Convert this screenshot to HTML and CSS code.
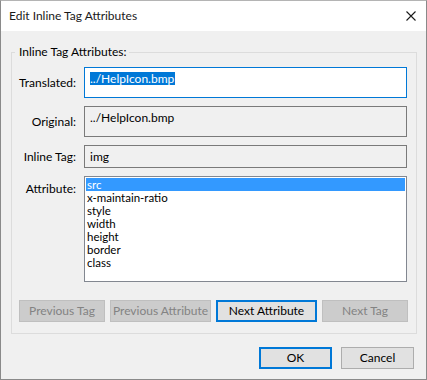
FILE: index.html
```html
<!DOCTYPE html>
<html>
<head>
<meta charset="utf-8">
<link rel="stylesheet" href="styles.css">
</head>
<body>
<div class="window">
  <div class="titlebar">
    <span class="title">Edit Inline Tag Attributes</span>
    <svg class="close" width="12" height="12" viewBox="0 0 12 12"><path d="M1.5 1.5 L10.5 10.5 M10.5 1.5 L1.5 10.5" stroke="#1a1a1a" stroke-width="1.1" fill="none"/></svg>
  </div>
  <div class="body">
    <fieldset class="group">
      <legend>Inline Tag Attributes:</legend>
      <div class="grid">
        <label class="lbl">Translated:</label>
        <div class="field edit"><span class="sel">../HelpIcon.bmp</span></div>
        <label class="lbl">Original:</label>
        <div class="field ro tall">../HelpIcon.bmp</div>
        <label class="lbl">Inline Tag:</label>
        <div class="field ro short">img</div>
        <label class="lbl top">Attribute:</label>
        <div class="list">
          <div class="item selected">src</div>
          <div class="item">x-maintain-ratio</div>
          <div class="item">style</div>
          <div class="item">width</div>
          <div class="item">height</div>
          <div class="item">border</div>
          <div class="item">class</div>
        </div>
      </div>
      <div class="navrow">
        <button class="btn disabled w86">Previous Tag</button>
        <button class="btn disabled w101">Previous Attribute</button>
        <button class="btn default w101">Next Attribute</button>
        <button class="btn disabled w86">Next Tag</button>
      </div>
    </fieldset>
    <div class="footer">
      <button class="btn default w73">OK</button>
      <button class="btn w73">Cancel</button>
    </div>
  </div>
</div>
</body>
</html>
```
FILE: styles.css
```css
html, body {
  margin: 0;
  padding: 0;
  background: #f0f0f0;
}
body {
  font-family: Lato, "Noto Sans", sans-serif;
  font-size: 12px;
  color: #000;
}
.window {
  width: 427px;
  height: 380px;
  box-sizing: border-box;
  border: 1px solid #8a8a8a;
  border-top-color: #b4b4b4;
  display: flex;
  flex-direction: column;
  background: #f0f0f0;
}
.titlebar {
  height: 30px;
  background: #fff;
  display: flex;
  align-items: center;
  justify-content: space-between;
  padding: 0 9px 0 8px;
  flex: none;
}
.title {
  font-size: 12px;
  color: #1a1a1a;
  line-height: 16px;
}
.close {
  display: block;
}
.body {
  flex: 1;
  padding: 13px 9px 0 10px;
  display: flex;
  flex-direction: column;
}
.group {
  margin: 0;
  border: 1px solid #dcdcdc;
  padding: 7px 8px 11px 0;
  min-width: 0;
}
.group legend {
  padding: 0 3px 0 4px;
  margin-left: 3px;
  line-height: 16px;
  font-size: 12px;
}
.grid {
  display: grid;
  grid-template-columns: 64px 323px;
  column-gap: 8px;
  row-gap: 8px;
}
.lbl {
  text-align: right;
  align-self: center;
  line-height: 16px;
  white-space: nowrap;
}
.lbl.top {
  align-self: start;
  margin-top: 5px;
}
.field {
  box-sizing: border-box;
  border: 1px solid #7a7a7a;
  padding: 4px 5px 0 5px;
  line-height: 14px;
  height: 31px;
}
.field.edit {
  border-color: #0078d7;
  background: #fff;
}
.field.ro {
  background: #f0f0f0;
}
.field.short {
  height: 23px;
  padding-top: 3px;
  line-height: 15px;
}
.sel {
  background: #0078d7;
  color: #fff;
  display: inline-block;
  line-height: 13px;
  padding-right: 1px;
}
.list {
  box-sizing: border-box;
  height: 106px;
  border: 1px solid #828790;
  background: #fff;
  padding: 1px;
}
.item {
  font-size: 11.5px;
  line-height: 13px;
  height: 13px;
  padding-left: 1px;
  white-space: nowrap;
}
.item.selected {
  background: #3399ff;
  color: #fff;
}
.navrow {
  display: flex;
  gap: 5px;
  margin-top: 18px;
  padding-left: 7px;
}
.btn {
  font-family: inherit;
  font-size: 12px;
  box-sizing: border-box;
  height: 22px;
  padding: 0;
  margin: 0;
  border: 1px solid #adadad;
  background: #e1e1e1;
  color: #000;
  line-height: 16px;
  white-space: nowrap;
}
.btn.disabled {
  background: #cccccc;
  border-color: #bfbfbf;
  color: #838383;
}
.btn.default {
  border: 2px solid #0078d7;
}
.w86 { width: 86px; }
.w101 { width: 101px; }
.w73 { width: 73px; }
.footer {
  display: flex;
  justify-content: flex-end;
  gap: 9px;
  margin-top: 13px;
  padding-right: 3px;
}
```
